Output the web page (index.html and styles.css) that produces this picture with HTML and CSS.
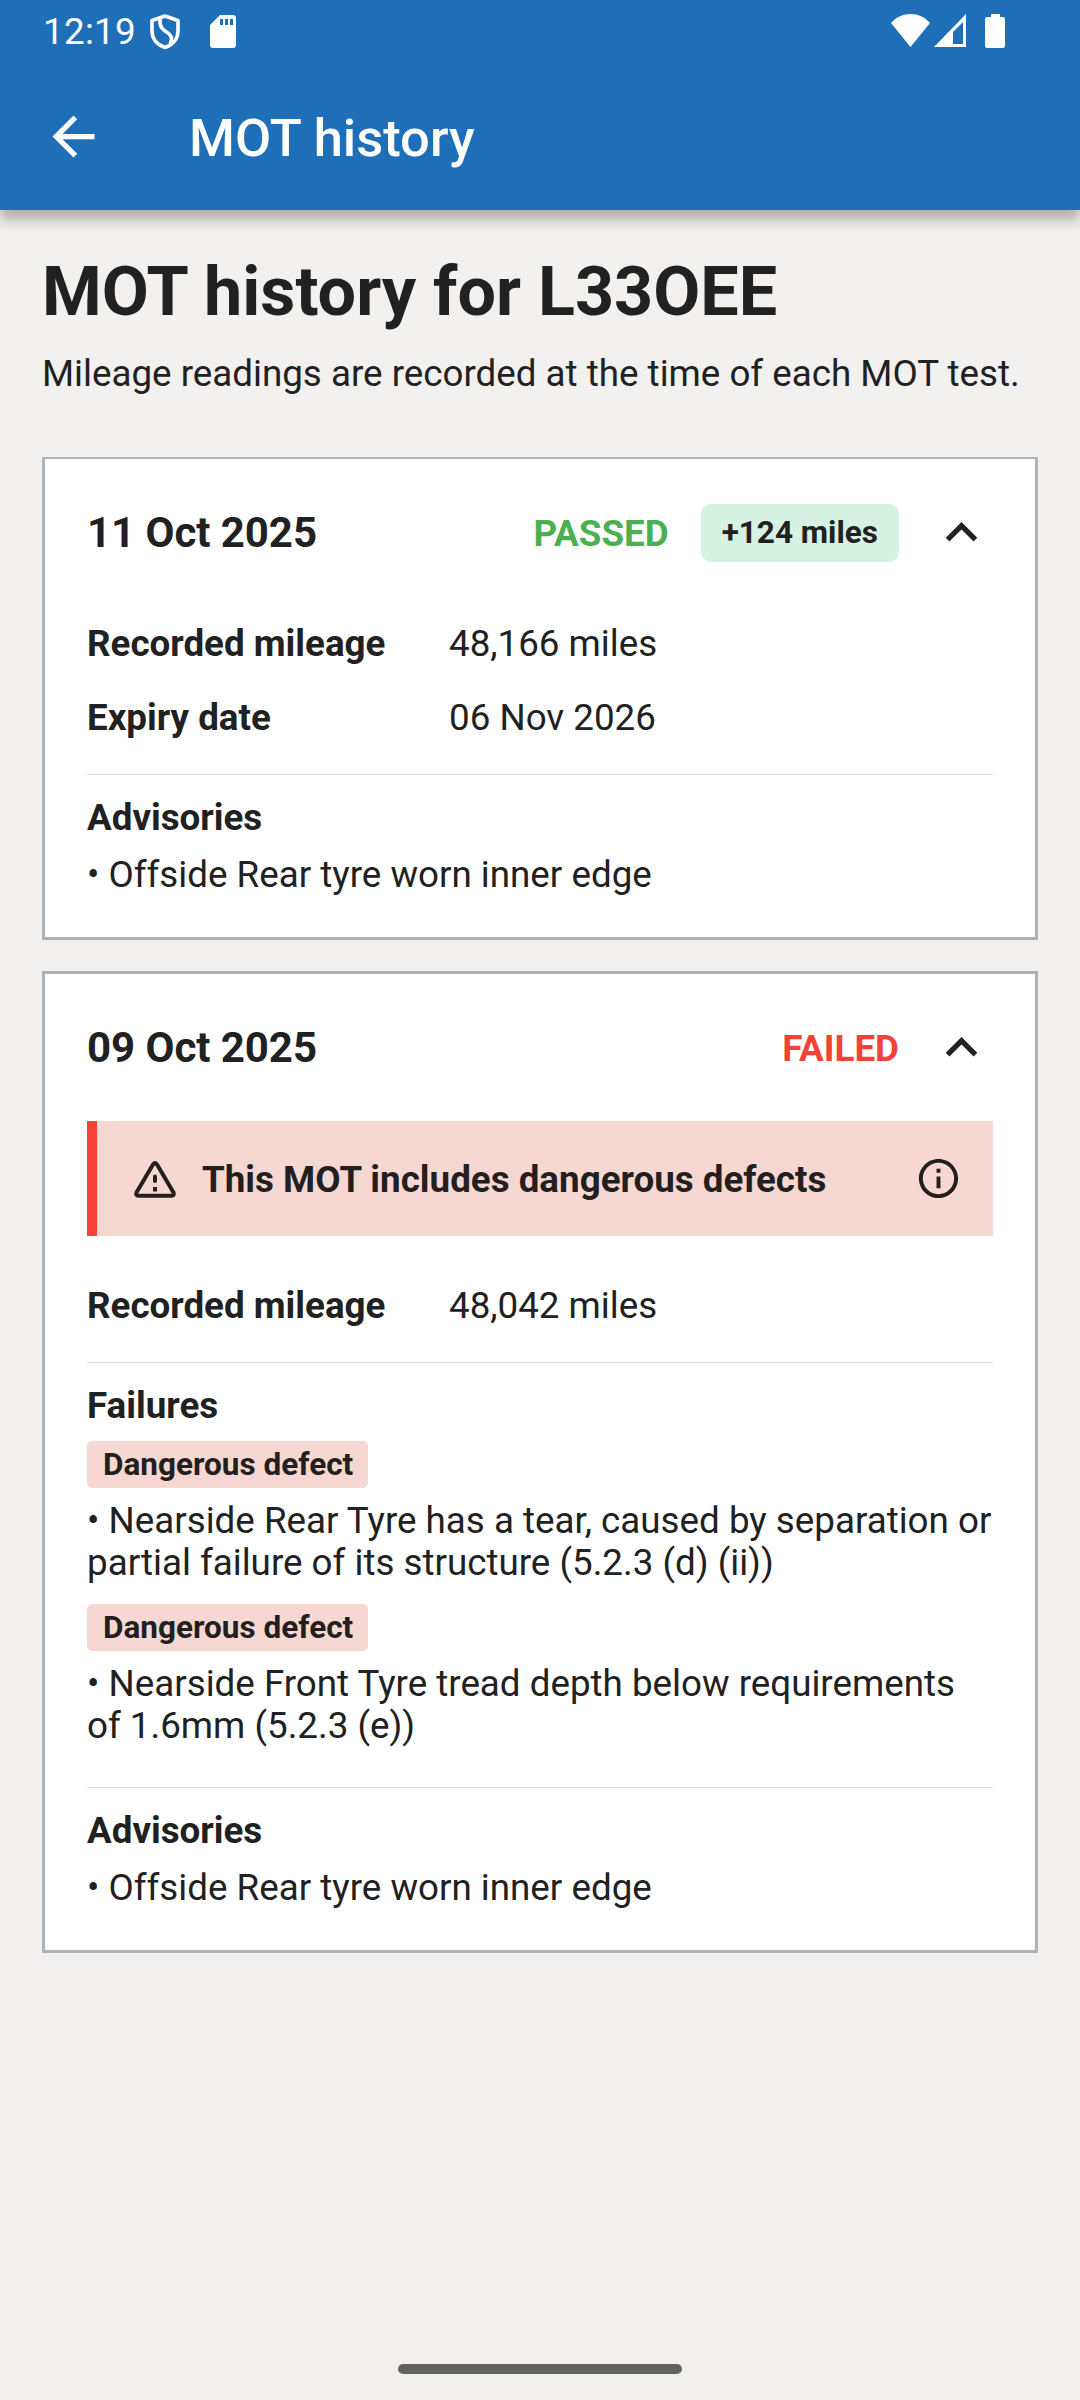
FILE: index.html
```html
<!DOCTYPE html>
<html lang="en">
<head>
    <meta charset="UTF-8">
    <meta name="viewport" content="width=device-width, initial-scale=1.0">
    <title>MOT history</title>
    <link rel="stylesheet" href="styles.css">
</head>
<body>
    <header class="top">
        <div class="status-bar">
            <span class="time">12:19</span>
            <svg class="shield" width="30" height="36" viewBox="0 0 30 36" fill="none" stroke="#fff" stroke-width="3.6" stroke-linejoin="round">
                <path d="M15 2 L28 6.500 V17 C28 25 22.500 31 15 33.500 C7.500 31 2 25 2 17 V6.500 Z"/>
                <path d="M10 4.500 C8.500 20 21.500 16 21.500 25 Q21.500 28 20 30"/>
            </svg>
            <svg class="sd" width="26" height="33" viewBox="0 0 26 33">
                <path fill="#fff" fill-rule="evenodd" d="M10 0 H23 Q26 0 26 3 V30 Q26 33 23 33 H3 Q0 33 0 30 V10 Z M10 4 V10 H13 V4 Z M15 4 V10 H18 V4 Z M20 4 V10 H23 V4 Z"/>
            </svg>
            <span class="spacer"></span>
            <svg class="wifi" width="39" height="33" viewBox="0 0 39 33">
                <path fill="#fff" d="M0 9 C10 -3 29 -3 39 9 L19.500 33 Z"/>
            </svg>
            <svg class="signal" width="32" height="33" viewBox="0 0 32 33">
                <path fill="#fff" fill-rule="evenodd" d="M32 0 V33 H0 Z M29 8 L19 18 V30 H29 Z"/>
            </svg>
            <svg class="battery" width="20" height="34" viewBox="0 0 20 34">
                <path fill="#fff" d="M6 0 H15 V3 H18 Q20 3 20 5 V32 Q20 34 18 34 H2 Q0 34 0 32 V5 Q0 3 2 3 H6 Z"/>
            </svg>
        </div>
        <div class="app-bar">
            <svg class="back" width="63" height="63" viewBox="0 0 24 24">
                <path fill="#fff" d="M20 11H7.830l5.590-5.590L12 4l-8 8 8 8 1.410-1.410L7.830 13H20v-2z"/>
            </svg>
            <div class="title">MOT history</div>
        </div>
    </header>

    <main>
        <h1>MOT history for L33OEE</h1>
        <p class="intro">Mileage readings are recorded at the time of each MOT test.</p>

        <section class="card first">
            <div class="card-header">
                <h2>11 Oct 2025</h2>
                <span class="passed">PASSED</span>
                <span class="miles">+124 miles</span>
                <svg class="chevron" width="63" height="63" viewBox="0 0 24 24">
                    <path fill="#212121" d="M12 8l-6 6 1.410 1.410L12 10.830l4.590 4.580L18 14z"/>
                </svg>
            </div>
            <dl>
                <dt>Recorded mileage</dt>
                <dd>48,166 miles</dd>
                <dt>Expiry date</dt>
                <dd>06 Nov 2026</dd>
            </dl>
            <hr>
            <h3>Advisories</h3>
            <p class="item">• Offside Rear tyre worn inner edge</p>
        </section>

        <section class="card">
            <div class="card-header">
                <h2>09 Oct 2025</h2>
                <span class="failed">FAILED</span>
                <svg class="chevron" width="63" height="63" viewBox="0 0 24 24">
                    <path fill="#212121" d="M12 8l-6 6 1.410 1.410L12 10.830l4.590 4.580L18 14z"/>
                </svg>
            </div>
            <div class="alert">
                <svg class="warning" width="42" height="39" viewBox="0 0 42 39" fill="none" stroke="#231f1e" stroke-width="4" stroke-linejoin="round">
                    <path d="M19 5.500 Q21 2.500 23 5.500 L39.500 33.500 Q40.500 36.800 37.500 36.800 H4.500 Q1.500 36.800 2.500 33.500 Z"/>
                    <path d="M21 17.500 V22" stroke-linecap="round"/>
                    <path d="M21 28 V32.500"/>
                </svg>
                <span class="alert-text">This MOT includes dangerous defects</span>
                <svg class="info" width="47" height="47" viewBox="0 0 24 24">
                    <path fill="#231f1e" d="M11 7h2v2h-2zM11 11h2v6h-2zM12 2C6.480 2 2 6.480 2 12s4.480 10 10 10 10-4.480 10-10S17.520 2 12 2zm0 18c-4.410 0-8-3.590-8-8s3.590-8 8-8 8 3.590 8 8-3.590 8-8 8z"/>
                </svg>
            </div>
            <dl class="after-alert">
                <dt>Recorded mileage</dt>
                <dd>48,042 miles</dd>
            </dl>
            <hr>
            <h3>Failures</h3>
            <div class="defect">
                <span class="tag">Dangerous defect</span>
                <p>• Nearside Rear Tyre has a tear, caused by separation or partial failure of its structure (5.2.3 (d) (ii))</p>
            </div>
            <div class="defect last">
                <span class="tag">Dangerous defect</span>
                <p>• Nearside Front Tyre tread depth below requirements of 1.6mm (5.2.3 (e))</p>
            </div>
            <hr>
            <h3>Advisories</h3>
            <p class="item">• Offside Rear tyre worn inner edge</p>
        </section>
    </main>

    <div class="home-bar"></div>
</body>
</html>
```

FILE: styles.css
```css
* {
  box-sizing: border-box;
  margin: 0;
  padding: 0;
}

body {
  height: 2400px;
  display: flex;
  flex-direction: column;
  background: #f3f1ef;
  color: #212121;
  font-family: Roboto, sans-serif;
  font-size: 36.75px;
  line-height: 42px;
}

svg {
  display: block;
  flex-shrink: 0;
}

.top {
  height: 210px;
  background: #1e6fb8;
  color: #fff;
  box-shadow: 0 10px 12px rgba(0, 0, 0, 0.27);
}

.status-bar {
  display: flex;
  height: 63px;
  padding: 14px 75px 0 43px;
}

.time {
  width: 107px;
  margin-top: -3px;
  letter-spacing: 0.3px;
}

.sd {
  margin: 1px 0 0 30px;
}

.spacer {
  flex: 1;
}

.signal {
  margin-left: 4px;
}

.battery {
  margin-left: 19px;
}

.app-bar {
  display: flex;
  align-items: center;
  height: 147px;
  padding: 0 42px;
}

.title {
  margin-left: 84px;
  padding-top: 2px;
  font-size: 52.5px;
  font-weight: 500;
}

main {
  flex: 1;
  padding: 42px 42px 0;
}

h1 {
  font-size: 68.25px;
  line-height: 80px;
}

.intro {
  margin-top: 21px;
}

.card {
  margin-top: 31px;
  padding: 42px 42px 41px;
  border: 3px solid #afb2b6;
  background: #fff;
}

.card.first {
  margin-top: 62px;
  border-top-width: 2px;
}

.card-header {
  display: flex;
  align-items: center;
  height: 63px;
}

h2 {
  flex: 1;
  font-size: 42px;
  letter-spacing: -0.05px;
}

.passed {
  padding-top: 2px;
  color: #4caf50;
  font-weight: 700;
}

.failed {
  padding-top: 2px;
  color: #f44336;
  font-weight: 700;
}

.miles {
  height: 58px;
  margin-left: 32px;
  padding: 0 21px;
  border-radius: 10px;
  background: #d5f2e3;
  font-size: 31.5px;
  font-weight: 700;
  line-height: 57px;
}

.chevron {
  margin-left: 31px;
}

dl {
  display: grid;
  grid-template-columns: 362px 1fr;
  row-gap: 32px;
  margin-top: 59px;
}

dt {
  font-weight: 700;
}

hr {
  height: 1px;
  margin: 35px 0 22px;
  border: none;
  background: #dedede;
}

h3 {
  font-size: 36.75px;
}

.item {
  margin-top: 15px;
}

.alert {
  display: flex;
  align-items: center;
  height: 115px;
  margin-top: 42px;
  padding: 0 31px 0 37px;
  border-left: 10px solid #f44336;
  background: #f6d7d2;
  color: #231f1e;
}

.alert-text {
  flex: 1;
  margin-left: 26px;
  padding-top: 2px;
  font-weight: 700;
}

.after-alert {
  margin-top: 49px;
}

.defect {
  margin-top: 14px;
}

.defect.last {
  margin: 20px 0 40px;
}

.tag {
  display: block;
  width: fit-content;
  height: 47px;
  margin-bottom: 12px;
  padding: 0 15px 0 16px;
  border-radius: 5px;
  background: #f6d7d2;
  color: #231f1e;
  font-size: 31.5px;
  font-weight: 700;
  line-height: 47px;
}

.home-bar {
  width: 284px;
  height: 10px;
  margin: 0 auto 26px;
  border-radius: 5px;
  background: #62625f;
}
```
